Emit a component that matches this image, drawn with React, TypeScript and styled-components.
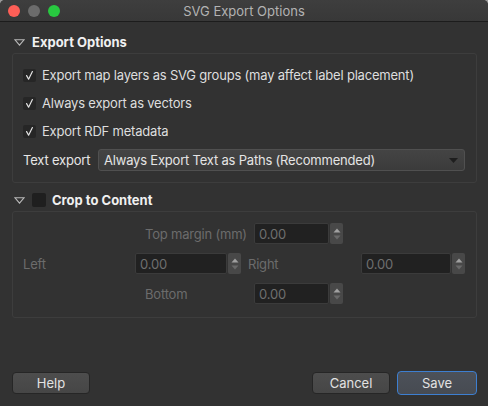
import React from "react";
import styled, { createGlobalStyle, css } from "styled-components";

const Global = createGlobalStyle`
  html, body { margin: 0; padding: 0; background: #9a9a9a; }
  body { font-family: Inter, "Noto Sans", "Liberation Sans", sans-serif; font-size: 13px; }
  * { box-sizing: border-box; }
`;

const Window = styled.div`
  width: 488px;
  height: 406px;
  background: #323232;
  border-radius: 5px 5px 0 0;
  overflow: hidden;
  display: flex;
  flex-direction: column;
`;

const TitleBar = styled.div`
  height: 22px;
  flex: none;
  background: linear-gradient(#3e3e3e, #383838);
  border-bottom: 1px solid #1c1c1c;
  display: flex;
  align-items: center;
  position: relative;
  padding-left: 8px;
  gap: 8px;
`;

const Light = styled.span<{ $c: string }>`
  width: 12px;
  height: 12px;
  border-radius: 50%;
  background: ${(p) => p.$c};
`;

const Title = styled.div`
  position: absolute;
  left: 0;
  right: 0;
  top: 0;
  bottom: 0;
  display: flex;
  align-items: center;
  justify-content: center;
  color: #b3b3b3;
  font-size: 13px;
  pointer-events: none;
`;

const Content = styled.div`
  flex: 1;
  display: flex;
  flex-direction: column;
  padding: 0 11px 0 12px;
  letter-spacing: -0.2px;
`;

const SectionHeader = styled.div<{ $top: number }>`
  display: flex;
  align-items: center;
  height: 20px;
  margin-top: ${(p) => p.$top}px;
  margin-bottom: 1px;
  padding-left: 2px;
  gap: 7px;
  color: #f0f0f0;
  font-weight: 700;
  font-size: 13px;
  letter-spacing: 0;
`;

const Tri = () => (
  <svg width="11" height="7" viewBox="0 0 11 7">
    <path d="M0.8 0.7 L10.2 0.7 L5.5 6.2 Z" fill="none" stroke="#b8b8b8" strokeWidth="1.1" />
  </svg>
);

const Group = styled.div<{ $h: number }>`
  height: ${(p) => p.$h}px;
  border: 1px solid #3d3d3d;
  border-radius: 3px;
  padding: 11px 11px 0 10px;
  display: flex;
  flex-direction: column;
`;

const CheckRow = styled.div`
  display: flex;
  align-items: center;
  height: 20px;
  margin-bottom: 8px;
  gap: 6px;
  color: #dedede;
`;

const Box = styled.span`
  width: 13px;
  height: 13px;
  flex: none;
  background: #262626;
  border-radius: 2px;
  display: flex;
  align-items: center;
  justify-content: center;
`;

const Check = () => (
  <svg width="11" height="11" viewBox="0 0 11 11">
    <path d="M2.6 5.6 L4.6 9.2 L8.4 1.6" fill="none" stroke="#e2e2e2" strokeWidth="1.2" strokeLinecap="round" strokeLinejoin="round" />
  </svg>
);

const HeaderBox = styled(Box)`
  width: 14px;
  height: 14px;
  background: #1f1f1f;
  margin-right: -1px;
`;

const ComboRow = styled.div`
  display: flex;
  align-items: center;
  height: 22px;
  color: #e6e6e6;
`;

const ComboLabel = styled.span`
  width: 75px;
  flex: none;
`;

const Combo = styled.div`
  flex: 1;
  height: 22px;
  border: 1px solid #505050;
  border-radius: 3px;
  background: linear-gradient(#444444, #3b3b3b);
  display: flex;
  align-items: center;
  padding: 0 6px 0 5px;
  color: #e4e4e4;
  justify-content: space-between;
`;

const Arrow = () => (
  <svg width="9" height="5" viewBox="0 0 9 5">
    <path d="M0 0 L9 0 L4.5 5 Z" fill="#1e1e1e" />
  </svg>
);

const SpinRow = styled.div`
  display: flex;
  align-items: center;
  height: 21px;
  margin-bottom: 9px;
`;

const Dim = styled.span<{ $w: number; $pad?: number }>`
  width: ${(p) => p.$w}px;
  padding-left: ${(p) => p.$pad ?? 0}px;
  flex: none;
  color: #6c6c6c;
`;

const Spin = styled.div`
  display: flex;
  align-items: stretch;
  height: 21px;
  gap: 1px;
`;

const Field = styled.div<{ $w: number }>`
  width: ${(p) => p.$w}px;
  border: 1px solid #3b3b3b;
  border-radius: 2px;
  background: #212121;
  color: #6f6f6f;
  display: flex;
  align-items: center;
  padding-left: 4px;
`;

const Stepper = styled.div`
  width: 13px;
  border-radius: 2px;
  background: #484848;
  display: flex;
  flex-direction: column;
  align-items: center;
  justify-content: center;
`;

const SpinBox = ({ w }: { w: number }) => (
  <Spin>
    <Field $w={w}>0.00</Field>
    <Stepper>
      <svg width="8" height="14" viewBox="0 0 8 14">
        <path d="M0.5 5.5 L7.5 5.5 L4 1.5 Z" fill="#a0a0a0" />
        <path d="M0.5 8.5 L7.5 8.5 L4 12.5 Z" fill="#6a6a6a" />
      </svg>
    </Stepper>
  </Spin>
);

const Footer = styled.div`
  display: flex;
  align-items: center;
  margin-top: auto;
  margin-bottom: 11px;
  height: 24px;
  letter-spacing: 0;
`;

const Button = styled.button<{ $default?: boolean }>`
  width: 78px;
  height: 22px;
  border-radius: 4px;
  border: 1px solid #262626;
  background: linear-gradient(#4d4d4d, #464646);
  color: #e2e2e2;
  font-family: inherit;
  font-size: 13px;
  padding: 0;
  ${(p) =>
    p.$default &&
    css`
      width: 80px;
      height: 24px;
      border: 1px solid #3d7fd1;
      background: linear-gradient(#4c5159, #474b52);
      margin-left: 7px;
    `}
`;

const Spacer = styled.div`
  flex: 1;
`;

export default function App() {
  return (
    <>
      <Global />
      <Window>
        <TitleBar>
          <Light $c="#fe5f57" />
          <Light $c="#6c6c6c" />
          <Light $c="#28c840" />
          <Title>SVG Export Options</Title>
        </TitleBar>
        <Content>
          <SectionHeader $top={10}>
            <Tri />
            <span>Export Options</span>
          </SectionHeader>
          <Group $h={130}>
            <CheckRow>
              <Box><Check /></Box>
              <span>Export map layers as SVG groups (may affect label placement)</span>
            </CheckRow>
            <CheckRow>
              <Box><Check /></Box>
              <span>Always export as vectors</span>
            </CheckRow>
            <CheckRow>
              <Box><Check /></Box>
              <span>Export RDF metadata</span>
            </CheckRow>
            <ComboRow>
              <ComboLabel>Text export</ComboLabel>
              <Combo>
                <span>Always Export Text as Paths (Recommended)</span>
                <Arrow />
              </Combo>
            </ComboRow>
          </Group>
          <SectionHeader $top={7}>
            <Tri />
            <HeaderBox />
            <span>Crop to Content</span>
          </SectionHeader>
          <Group $h={107}>
            <SpinRow>
              <Dim $w={122} />
              <Dim $w={109}>Top margin (mm)</Dim>
              <SpinBox w={75} />
            </SpinRow>
            <SpinRow>
              <Dim $w={112}>Left</Dim>
              <SpinBox w={92} />
              <Dim $w={120} $pad={7}>Right</Dim>
              <SpinBox w={90} />
            </SpinRow>
            <SpinRow>
              <Dim $w={122} />
              <Dim $w={109}>Bottom</Dim>
              <SpinBox w={75} />
            </SpinRow>
          </Group>
          <Footer>
            <Button>Help</Button>
            <Spacer />
            <Button>Cancel</Button>
            <Button $default>Save</Button>
          </Footer>
        </Content>
      </Window>
    </>
  );
}
